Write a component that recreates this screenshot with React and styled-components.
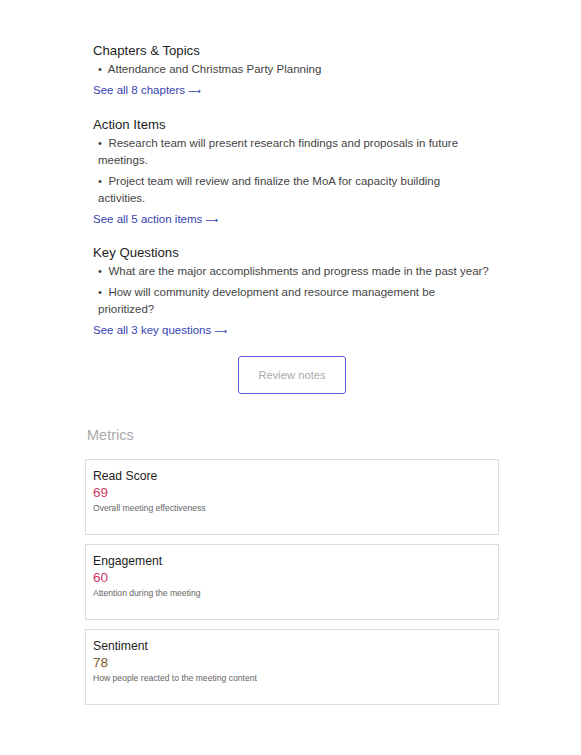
import styled, {createGlobalStyle} from "styled-components";

const GlobalStyle = createGlobalStyle`
  body {
    margin: 0;
    background: #fff;
    font-family: "Liberation Sans", Arial, sans-serif;
  }
`;

const Page = styled.div`
  width: 414px;
  margin-left: 85px;
  padding-top: 40px;
  padding-bottom: 40px;
`;

const Section = styled.div`
  padding: 0 9px 0 8px;
  margin-bottom: 14.5px;
`;

const SectionTitle = styled.div`
  font-size: 13.2px;
  line-height: 21px;
  color: #222;
`;

const List = styled.ul`
  list-style: none;
  margin: 0;
  padding: 0 0 0 5px;
`;

const Item = styled.li`
  font-size: 11.5px;
  line-height: 17px;
  color: #444;
  margin-bottom: 4px;
`;

const SeeAll = styled.a`
  display: block;
  height: 17px;
  font-size: 11.5px;
  line-height: 17px;
  color: #3544b1;
  text-decoration: none;
  margin-top: 2px;
  cursor: pointer;
`;

const Arrow = styled.span`
  font-family: "DejaVu Sans", sans-serif;
  font-size: 9px;
  line-height: 1;
`;

const ButtonRow = styled.div`
  display: flex;
  justify-content: center;
  margin-top: 16.5px;
`;

const ReviewButton = styled.button`
  width: 108px;
  height: 38px;
  border: 1px solid #5b5bd6;
  border-radius: 3px;
  background: #fff;
  color: #aaa;
  font-family: "Liberation Sans", Arial, sans-serif;
  font-size: 11.2px;
  cursor: pointer;
`;

const MetricsTitle = styled.div`
  font-size: 14.5px;
  line-height: 20px;
  color: #aaa;
  margin: 31px 0 14px 2px;
`;

const Cards = styled.div`
  display: flex;
  flex-direction: column;
  gap: 9px;
`;

const Card = styled.div`
  height: 76px;
  box-sizing: border-box;
  border: 1px solid #ddd;
  padding: 8px 7px;
`;

const CardTitle = styled.div`
  font-size: 12.2px;
  line-height: 17px;
  color: #222;
`;

const CardValue = styled.div`
  font-size: 13.5px;
  line-height: 16px;
  color: ${p => p.color};
`;

const CardDesc = styled.div`
  font-size: 8.6px;
  line-height: 14px;
  color: #666;
`;

const sections = [
    {
        title: "Chapters & Topics",
        items: ["Attendance and Christmas Party Planning"],
        link: "See all 8 chapters",
    },
    {
        title: "Action Items",
        items: [
            "Research team will present research findings and proposals in future meetings.",
            "Project team will review and finalize the MoA for capacity building activities.",
        ],
        link: "See all 5 action items",
    },
    {
        title: "Key Questions",
        items: [
            "What are the major accomplishments and progress made in the past year?",
            "How will community development and resource management be prioritized?",
        ],
        link: "See all 3 key questions",
    },
];

const metrics = [
    {name: "Read Score", value: 69, color: "#d03a66", desc: "Overall meeting effectiveness"},
    {name: "Engagement", value: 60, color: "#d03a66", desc: "Attention during the meeting"},
    {name: "Sentiment", value: 78, color: "#7a5a2e", desc: "How people reacted to the meeting content"},
];

export default function App() {
    return (
        <>
            <GlobalStyle/>
            <Page>
                {sections.map((s) => (
                    <Section key={s.title}>
                        <SectionTitle>{s.title}</SectionTitle>
                        <List>
                            {s.items.map((item) => (
                                <Item key={item}>•&nbsp; {item}</Item>
                            ))}
                        </List>
                        <SeeAll>{s.link} <Arrow>⟶</Arrow></SeeAll>
                    </Section>
                ))}

                <ButtonRow>
                    <ReviewButton>Review notes</ReviewButton>
                </ButtonRow>

                <MetricsTitle>Metrics</MetricsTitle>
                <Cards>
                    {metrics.map((m) => (
                        <Card key={m.name}>
                            <CardTitle>{m.name}</CardTitle>
                            <CardValue color={m.color}>{m.value}</CardValue>
                            <CardDesc>{m.desc}</CardDesc>
                        </Card>
                    ))}
                </Cards>
            </Page>
        </>
    );
}
